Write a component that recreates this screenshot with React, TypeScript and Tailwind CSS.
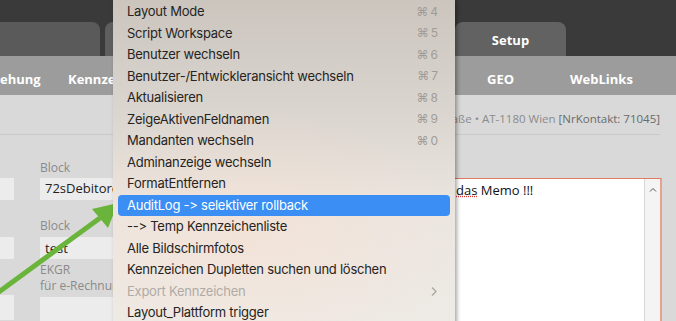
import React from "react";

type Item = { label: string; key?: string; active?: boolean; disabled?: boolean; sub?: boolean };

const items: Item[] = [
  { label: "Layout Mode", key: "4" },
  { label: "Script Workspace", key: "5" },
  { label: "Benutzer wechseln", key: "6" },
  { label: "Benutzer-/Entwickleransicht wechseln", key: "7" },
  { label: "Aktualisieren", key: "8" },
  { label: "ZeigeAktivenFeldnamen", key: "9" },
  { label: "Mandanten wechseln", key: "0" },
  { label: "Adminanzeige wechseln" },
  { label: "FormatEntfernen" },
  { label: "AuditLog -> selektiver rollback", active: true },
  { label: "--> Temp Kennzeichenliste" },
  { label: "Alle Bildschirmfotos" },
  { label: "Kennzeichen Dupletten suchen und löschen" },
  { label: "Export Kennzeichen", disabled: true, sub: true },
  { label: "Layout_Plattform trigger" },
];

const Menu: React.FC = () => (
  <div className="absolute left-[113px] top-0 w-[342px] h-[340px] bg-[linear-gradient(180deg,#cbc5be_0%,#dbd6d0_35%,#ebe5df_60%,#eeebe6_100%)] shadow-[2px_0_4px_rgba(0,0,0,0.35)] font-['Inter',sans-serif] text-[13px] tracking-[-0.25px]">
    <div className="absolute inset-0 bg-[radial-gradient(ellipse_60%_40%_at_40%_70%,rgba(255,220,200,0.35),transparent)]" />
    <div className="relative flex flex-col px-[5px] pt-[1px]">
      {items.map((it) => (
        <div
          key={it.label}
          className={
            "h-[21.5px] flex items-center justify-between pl-[9px] pr-[10px] rounded-[4px] " +
            (it.active ? "bg-[#3a8ef4] text-white" : it.disabled ? "text-[#b0aba6]" : "text-[#262422]")
          }
        >
          <span>{it.label}</span>
          {it.key && <span className="text-[#a19c97] text-[12px] tracking-[2px]">⌘{it.key}</span>}
          {it.sub && (
            <svg width="8" height="11" viewBox="0 0 8 11" className="mr-[2px]">
              <path d="M2 1.5 L6 5.5 L2 9.5" fill="none" stroke="#aaa5a0" strokeWidth="1.3" />
            </svg>
          )}
        </div>
      ))}
    </div>
  </div>
);

const Arrow: React.FC = () => (
  <svg className="absolute left-0 top-0" width="676" height="321" viewBox="0 0 676 321">
    <line x1="-4" y1="294" x2="100" y2="218" stroke="#6ab43c" strokeWidth="5" />
    <polygon points="118,203 92,209 108,228" fill="#6ab43c" />
  </svg>
);

export default function App() {
  return (
    <div className="relative w-[676px] h-[321px] overflow-hidden bg-[#d9d9d9] font-['Open_Sans',sans-serif]">
      {/* Tabs */}
      <div className="h-[56px] bg-[#3a3a3a] flex items-end gap-[5px]">
        <div className="w-[100px] h-[34px] bg-[#5a5a5a] rounded-tr-[8px]" />
        <div className="w-[345px] h-[34px] bg-[#5e5e5e] rounded-t-[8px]" />
        <div className="w-[111px] h-[34px] bg-[#626262] rounded-t-[8px] flex items-center justify-center text-white text-[13px] font-bold pt-[3px]">
          Setup
        </div>
      </div>
      {/* Nav */}
      <div className="h-[39px] bg-[#9c9c9c] flex items-center pt-[9px] text-white text-[13px] font-bold">
        <span className="w-[68px]">ehung</span>
        <span className="w-[419px]">Kennzeichen</span>
        <span className="w-[83px]">GEO</span>
        <span>WebLinks</span>
      </div>
      {/* Content */}
      <div className="relative">
        <div className="h-[40px] mr-[16px] border-b border-[#c9c9c9] flex items-end pb-[7px] justify-end text-[11.5px] text-[#8b8b8b]">
          <span>Straße • AT-1180 Wien&nbsp;</span>
          <span className="text-[#6a6a6a]">[NrKontakt: 71045]</span>
        </div>
        <div className="flex pt-[25px]">
          <div className="w-[14px] flex flex-col">
            <div className="h-[22px] mt-[18px] bg-[#ececec]" />
            <div className="h-[22px] mt-[37px] bg-[#ececec]" />
            <div className="h-[25px] mt-[36px] bg-[#ececec]" />
          </div>
          <div className="ml-[26px] w-[90px] flex flex-col text-[12px] text-[#8a8a8a]">
            <div className="h-[18px] leading-[14px] pt-[1px]">Block</div>
            <div className="h-[22px] bg-[#ececec] pl-[5px] flex items-center text-[13px] text-[#222]">72sDebitoren</div>
            <div className="h-[19px] mt-[18px] leading-[14px] pt-[1px]">Block</div>
            <div className="h-[22px] bg-[#ececec] pl-[5px] flex items-center text-[13px] text-[#222] pt-[2px]">test</div>
            <div className="mt-[3px] leading-[16px]">EKGR<br />für e-Rechnung</div>
            <div className="h-[25px] mt-[3px] bg-[#ececec]" />
          </div>
          <div className="ml-[317px] mt-[18px] w-[215px] h-[160px] flex bg-white border border-[#e07a62] border-r-2 border-r-[#e9a08e]">
            <div className="flex-1 pl-[8px] pt-[2px] text-[13px] text-[#111]">
              <span className="underline decoration-dotted decoration-[#e03030]">das</span> Memo !!!
            </div>
            <div className="w-[16px] bg-[#f4f4f4] border-l border-[#d6d6d6] flex justify-center pt-[8px]">
              <svg width="8" height="5" viewBox="0 0 8 5">
                <path d="M1 4.5 L4 1.5 L7 4.5" fill="none" stroke="#555" strokeWidth="1" />
              </svg>
            </div>
          </div>
        </div>
      </div>
      <Arrow />
      <Menu />
    </div>
  );
}
